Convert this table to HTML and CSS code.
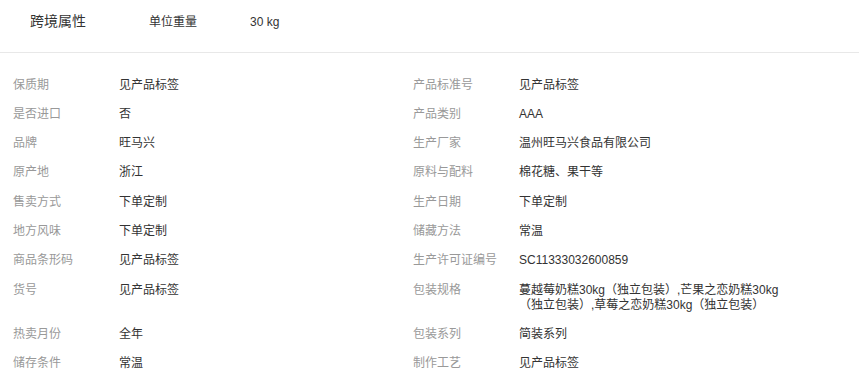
FILE: index.html
```html
<!DOCTYPE html>
<html lang="zh-CN">
<head>
<meta charset="utf-8">
<link rel="stylesheet" href="styles.css">
</head>
<body>
<div class="attrs">
  <div class="cross">
    <span class="cross-title">跨境属性</span>
    <span class="cross-label">单位重量</span>
    <span class="cross-value">30 kg</span>
  </div>
  <div class="grid">
    <div class="item"><span class="label">保质期</span><span class="value">见产品标签</span></div>
    <div class="item"><span class="label">产品标准号</span><span class="value">见产品标签</span></div>
    <div class="item"><span class="label">是否进口</span><span class="value">否</span></div>
    <div class="item"><span class="label">产品类别</span><span class="value">AAA</span></div>
    <div class="item"><span class="label">品牌</span><span class="value">旺马兴</span></div>
    <div class="item"><span class="label">生产厂家</span><span class="value">温州旺马兴食品有限公司</span></div>
    <div class="item"><span class="label">原产地</span><span class="value">浙江</span></div>
    <div class="item"><span class="label">原料与配料</span><span class="value">棉花糖、果干等</span></div>
    <div class="item"><span class="label">售卖方式</span><span class="value">下单定制</span></div>
    <div class="item"><span class="label">生产日期</span><span class="value">下单定制</span></div>
    <div class="item"><span class="label">地方风味</span><span class="value">下单定制</span></div>
    <div class="item"><span class="label">储藏方法</span><span class="value">常温</span></div>
    <div class="item"><span class="label">商品条形码</span><span class="value">见产品标签</span></div>
    <div class="item"><span class="label">生产许可证编号</span><span class="value">SC11333032600859</span></div>
    <div class="item"><span class="label">货号</span><span class="value">见产品标签</span></div>
    <div class="item"><span class="label">包装规格</span><span class="value">蔓越莓奶糕30kg（独立包装）,芒果之恋奶糕30kg（独立包装）,草莓之恋奶糕30kg（独立包装）</span></div>
    <div class="item"><span class="label">热卖月份</span><span class="value">全年</span></div>
    <div class="item"><span class="label">包装系列</span><span class="value">简装系列</span></div>
    <div class="item"><span class="label">储存条件</span><span class="value">常温</span></div>
    <div class="item"><span class="label">制作工艺</span><span class="value">见产品标签</span></div>
  </div>
</div>
</body>
</html>
```
FILE: styles.css
```css
html, body {
  margin: 0;
  padding: 0;
  background: #ffffff;
}

body {
  font-family: "Liberation Sans", "Noto Sans CJK SC", sans-serif;
  font-size: 12px;
  color: #333333;
}

.cross {
  display: flex;
  align-items: baseline;
  box-sizing: border-box;
  height: 53px;
  padding: 13px 0 0 30px;
  border-bottom: 1px solid #e8e8e8;
  line-height: 16px;
}

.cross-title {
  width: 119px;
  font-size: 14px;
  color: #333333;
}

.cross-label {
  width: 101px;
  color: #333333;
}

.cross-value {
  color: #333333;
}

.grid {
  display: grid;
  grid-template-columns: 400px 1fr;
  align-items: start;
  padding: 17.5px 0 0 13px;
}

.item {
  display: flex;
  padding: 7.15px 0;
  line-height: 15px;
}

.label {
  flex: 0 0 106px;
  color: #999999;
}

.value {
  width: 266px;
  color: #333333;
}
```
